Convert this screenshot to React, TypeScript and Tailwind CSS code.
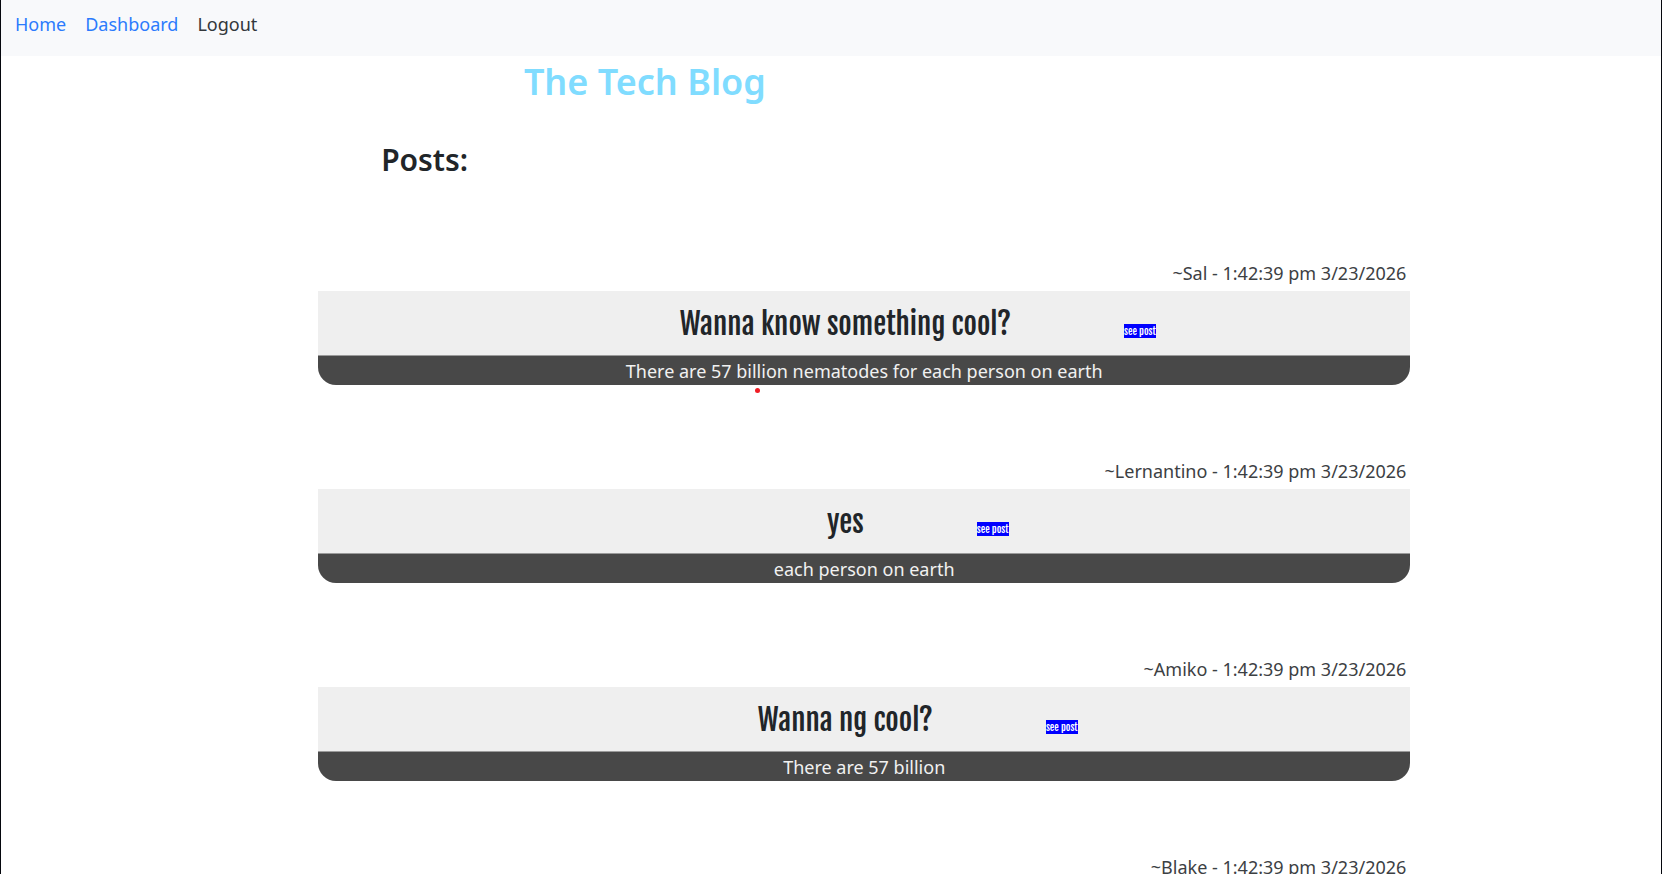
type Post = { author: string; title?: string; body?: string };

const STAMP = "1:42:39 pm 3/23/2026";

const posts: Post[] = [
  {
    author: "Sal",
    title: "Wanna know something cool?",
    body: "There are 57 billion nematodes for each person on earth",
  },
  { author: "Lernantino", title: "yes", body: "each person on earth" },
  { author: "Amiko", title: "Wanna ng cool?", body: "There are 57 billion" },
  { author: "Blake" },
];

function PostCard({ author, title, body }: Post) {
  return (
    <article>
      <p className="pr-1 pb-1 text-right text-lg/7 text-[#3c4043]">
        ~{author} - {STAMP}
      </p>
      {title && (
        <div className="overflow-hidden rounded-b-[18px]">
          <div className="flex h-16 items-center justify-center bg-[#efefef] pl-[107px] font-['Fjalla_One','Roboto_Condensed','Noto_Sans',sans-serif]">
            <h3 className="pt-px text-[29px]/10 text-[#212529]">{title}</h3>
            <button
              type="button"
              className="mt-4 ml-[113px] bg-[#0000ff] text-[10px]/[14px] whitespace-nowrap text-white"
            >
              see post
            </button>
          </div>
          <p className="border-t border-[#9a9a9a] bg-[#484848] pt-px text-center text-lg/7 text-[#f1f1f1]">
            {body}
          </p>
        </div>
      )}
    </article>
  );
}

export default function App() {
  return (
    <div className="h-screen overflow-hidden border-x border-[#05070d] bg-white font-['Noto_Sans','Open_Sans',sans-serif] text-[#212529]">
      <nav className="flex h-14 gap-[19px] bg-[#f8f9fb] px-3.5 pt-2.5 text-lg/7">
        <a href="#home" className="text-[#2b7bfd]">Home</a>
        <a href="#dashboard" className="text-[#2b7bfd]">Dashboard</a>
        <a href="#logout" className="text-[#33373b]">Logout</a>
      </nav>
      <header>
        <h1 className="pt-1 pl-[31.5%] text-4xl/[44px] font-semibold text-[#80dcff]">The Tech Blog</h1>
        <h2 className="pt-9 pl-[22.9%] text-3xl/[40px] font-semibold">Posts:</h2>
      </header>
      <main className="relative mr-[15.1%] ml-[19.1%] flex flex-col gap-[72px] pt-[79px]">
        {posts.map((post) => (
          <PostCard key={post.author} {...post} />
        ))}
        <span className="absolute top-[208px] left-[40%] size-[5px] rounded-full bg-[#f01c24]" />
      </main>
    </div>
  );
}
